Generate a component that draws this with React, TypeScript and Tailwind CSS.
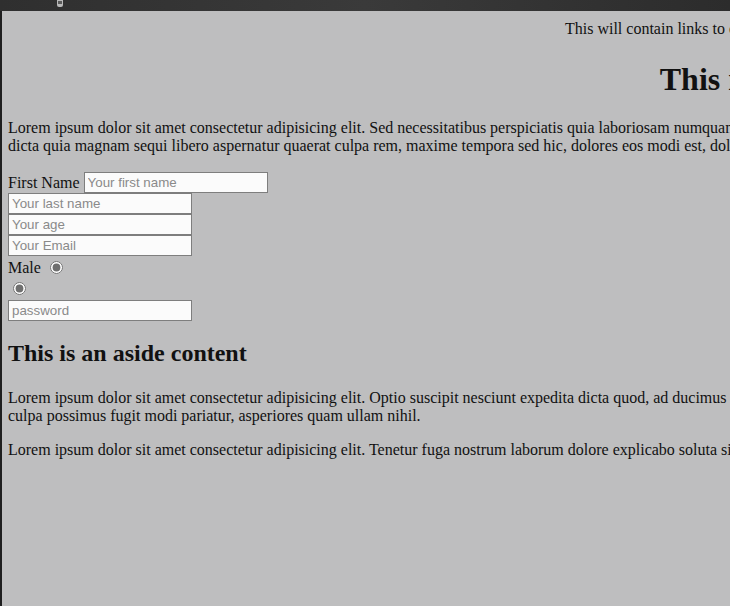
import React from 'react';

const serif = { fontFamily: '"Liberation Serif", "Times New Roman", serif' };

const Field = ({ placeholder, type = 'text' }: { placeholder: string; type?: string }) => (
    <input
        type={type}
        placeholder={placeholder}
        className="block w-[184px] h-[21px] px-[3px] bg-[#fbfbfb] border border-[#7e7e7e] text-[13.33px] text-[#222] placeholder:text-[#8a8a8a] font-['Liberation_Sans',Arial,sans-serif] outline-none"
    />
);

const Radio = ({ name }: { name: string }) => (
    <input
        type="radio"
        name={name}
        defaultChecked
        className="inline-block align-middle ml-[5px] mr-[3px] mt-[1px] w-[13px] h-[13px] accent-[#6f6f6f]"
    />
);

export default function App() {
    return (
        <div className="w-[730px] h-[606px] overflow-hidden bg-[#1f1f1f] flex flex-col">
            {/* browser chrome strip */}
            <div className="h-[11px] shrink-0 bg-gradient-to-r from-[#2f2f2f] via-[#3a3a3a] to-[#2c2c2c] relative">
                <div className="absolute left-[57px] top-0 w-[6px] h-[7px] rounded-b-[2px] bg-[#b9b9b9]" />
                <div className="absolute left-[58px] top-[1px] w-[4px] h-[3px] bg-[#5a5a5a]" />
            </div>

            <div className="flex-1 ml-[2px] bg-[#bebebf] text-[#111] text-[16px] leading-[18px] overflow-hidden" style={serif}>
                <div className="w-[1800px] px-[6px]">
                    <header className="pt-[9px] text-center">
                        <p>This will contain links to other pages of the website, like home, about us, our services, a blog and contact</p>
                    </header>

                    <main>
                        <h1 className="mt-[23px] text-center text-[32px] leading-[37px] font-bold">
                            This is the main content of the page
                        </h1>

                        <p className="mt-[21px]">
                            Lorem ipsum dolor sit amet consectetur adipisicing elit. Sed necessitatibus perspiciatis quia laboriosam numquam eveniet aliquid voluptatem nobis,
                            <br />
                            dicta quia magnam sequi libero aspernatur quaerat culpa rem, maxime tempora sed hic, dolores eos modi est, doloremque.
                        </p>

                        <form className="mt-[17px]">
                            <div className="flex items-center h-[21px]">
                                <label className="mr-[4px]">First Name</label>
                                <Field placeholder="Your first name" />
                            </div>
                            <Field placeholder="Your last name" />
                            <Field placeholder="Your age" type="number" />
                            <Field placeholder="Your Email" type="email" />
                            <div className="h-[22px] flex items-center">
                                <label className="pt-[2px]">Male</label>
                                <span className="w-[4px]" />
                                <Radio name="male" />
                            </div>
                            <div className="h-[20px] flex items-center">
                                <Radio name="female" />
                            </div>
                            <div className="pt-[2px]">
                                <Field placeholder="password" type="password" />
                            </div>
                        </form>
                    </main>

                    <aside>
                        <h2 className="mt-[18px] text-[24px] leading-[28px] font-bold">This is an aside content</h2>
                        <p className="mt-[22px]">
                            Lorem ipsum dolor sit amet consectetur adipisicing elit. Optio suscipit nesciunt expedita dicta quod, ad ducimus voluptates eius quo,
                            <br />
                            culpa possimus fugit modi pariatur, asperiores quam ullam nihil.
                        </p>
                        <p className="mt-[16px]">
                            Lorem ipsum dolor sit amet consectetur adipisicing elit. Tenetur fuga nostrum laborum dolore explicabo soluta sint.
                        </p>
                    </aside>
                </div>
            </div>
        </div>
    );
}
